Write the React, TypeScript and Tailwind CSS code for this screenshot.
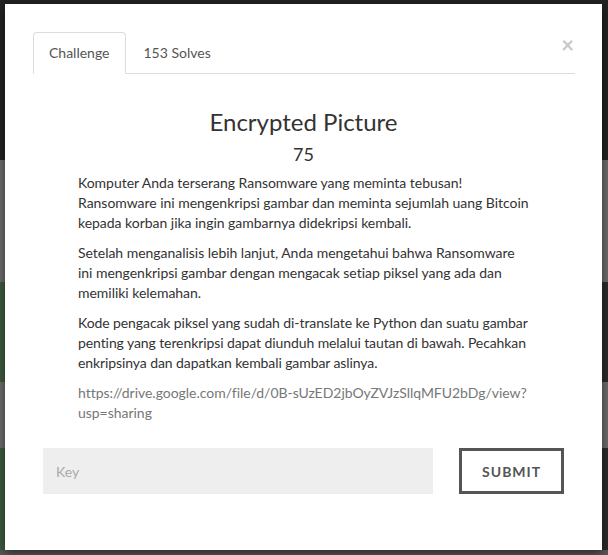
import React, { useState } from 'react';

const paragraphs = [
    'Komputer Anda terserang Ransomware yang meminta tebusan! Ransomware ini mengenkripsi gambar dan meminta sejumlah uang Bitcoin kepada korban jika ingin gambarnya didekripsi kembali.',
    'Setelah menganalisis lebih lanjut, Anda mengetahui bahwa Ransomware ini mengenkripsi gambar dengan mengacak setiap piksel yang ada dan memiliki kelemahan.',
];

const Backdrop: React.FC = () => (
    <div className="flex flex-col w-[608px] h-[555px] bg-[#222222]">
        <div className="h-[160px] bg-[#222222]" />
        <div className="h-[122px] bg-[#6b6b6b]" />
        <div className="h-[100px] flex">
            <div className="flex-1 bg-[#3d5a3d]" />
            <div className="flex-1 bg-[#2b2b2b]" />
        </div>
        <div className="h-[66px] bg-[#6b6b6b]" />
        <div className="h-[102px] flex">
            <div className="flex-1 bg-[#3d5a3d]" />
            <div className="flex-1 bg-[#2b2b2b]" />
        </div>
        <div className="flex-1 bg-[#575757]" />
    </div>
);

const App: React.FC = () => {
    const [tab, setTab] = useState<'challenge' | 'solves'>('challenge');
    const [key, setKey] = useState('');

    return (
        <div className="relative w-[608px] h-[555px] overflow-hidden font-['Lato','Liberation_Sans',sans-serif]">
            <Backdrop />
            <div className="absolute left-[5px] top-[4px] w-[597px] h-[546px] bg-white shadow-[0_3px_9px_rgba(0,0,0,0.5)] px-[28px] pt-[28px]">
                <button className="absolute right-[28px] top-[30px] text-[22px] font-bold leading-none text-[#c8c8c8]">
                    ×
                </button>
                {/* tabs */}
                <div className="flex border-b border-[#dddddd] mr-[-1px]">
                    <button
                        onClick={() => setTab('challenge')}
                        className={`mb-[-1px] mr-[2px] px-[15px] py-[10px] text-[14px] leading-[20px] text-[#555555] rounded-t-[4px] border ${tab === 'challenge' ? 'border-[#dddddd] border-b-white bg-white' : 'border-transparent'}`}
                    >
                        Challenge
                    </button>
                    <button
                        onClick={() => setTab('solves')}
                        className={`mb-[-1px] mr-[2px] px-[15px] py-[10px] text-[14px] leading-[20px] text-[#555555] rounded-t-[4px] border ${tab === 'solves' ? 'border-[#dddddd] border-b-white bg-white' : 'border-transparent'}`}
                    >
                        153 Solves
                    </button>
                </div>

                <h3 className="mt-[33px] text-center text-[24px] leading-[30px] text-[#333333]">Encrypted Picture</h3>
                <div className="mt-[6px] text-center text-[18px] leading-[22px] text-[#333333]">75</div>

                <div className="mt-[8px] ml-[45px] w-[453px] text-[14px] leading-[20px] tracking-[-0.03px] text-[#333333]">
                    {paragraphs.map((p, i) => (
                        <p key={i} className="mb-[10px]">{p}</p>
                    ))}
                    <p className="mb-[10px] tracking-[-0.09px]">
                        Kode pengacak piksel yang sudah di-translate ke Python dan suatu gambar penting yang terenkripsi dapat diunduh melalui tautan di bawah. Pecahkan enkripsinya dan dapatkan kembali gambar aslinya.
                    </p>
                    <p className="text-[#777777]">
                        https://drive.google.com/file/d/0B-sUzED2jbOyZVJzSllqMFU2bDg/view?<wbr />usp=sharing
                    </p>
                </div>

                <div className="mt-[25px] flex gap-[26px] px-[10px]">
                    <input
                        value={key}
                        onChange={(e) => setKey(e.target.value)}
                        placeholder="Key"
                        className="w-[391px] h-[46px] bg-[#eeeeee] px-[13px] text-[14px] text-[#555555] placeholder:text-[#aaaaaa] outline-none"
                    />
                    <button className="w-[105px] h-[46px] border-[3px] border-[#555555] text-[14px] font-bold tracking-[1px] text-[#555555]">
                        SUBMIT
                    </button>
                </div>
            </div>
        </div>
    );
};

export default App;
